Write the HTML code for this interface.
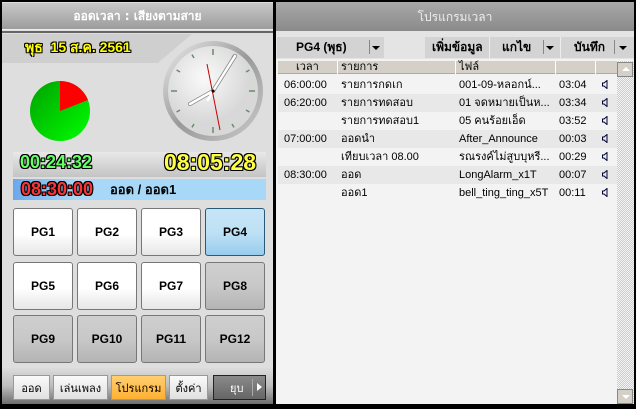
<!DOCTYPE html>
<html><head><meta charset="utf-8"><style>
*{margin:0;padding:0;box-sizing:border-box}
body{width:636px;height:409px;background:#000;position:relative;overflow:hidden;font-family:"Liberation Sans","DejaVu Sans",sans-serif;font-size:11px}
.a{position:absolute;line-height:1.2}
.th{font-family:"DejaVu Sans",sans-serif}
.pg{position:absolute;width:60px;height:48px;border:1px solid #777;border-radius:3px;background:linear-gradient(#fff,#fff 55%,#e6e6e6);display:flex;align-items:center;justify-content:center;font-weight:bold;font-size:12px;color:#000}
.pg.g{background:linear-gradient(#cfcfcf,#c8c8c8 50%,#b4b4b4)}
.pg.b{background:linear-gradient(#c6e4f6,#bfe1f5 50%,#98cdee);border-color:#2a5a7a}
.bb{position:absolute;top:375px;height:25px;border:1px solid #999;background:linear-gradient(#fafafa,#e0e0e0);display:flex;align-items:center;justify-content:center;font-size:11px;color:#000}
.row{position:absolute;left:278px;width:339px;height:18px;font-size:11px;color:#000}
.row span{position:absolute;top:0;height:18px;line-height:18px;white-space:nowrap}
.row svg{position:absolute;left:324px;top:4px}
.o{text-shadow:1px 1px 0 #000,-1px 0 #000,0 -1px #000,1px 0 #000,-1px -1px #000,1px -1px #000,-1px 1px #000}
</style></head><body>
<div class="a" style="left:2px;top:2px;width:271px;height:402px;background:#dedede"></div>
<div class="a th" style="left:2px;top:3px;width:271px;height:27px;background:linear-gradient(#c8c8c8,#9c9c9c);border-bottom:1px solid #eee;color:#fff;font-size:12px;font-weight:bold;text-align:center;line-height:27px">ออดเวลา : เสียงตามสาย</div>
<div class="a" style="left:2px;top:31px;width:271px;height:2px;background:#666"></div>
<div class="a" style="left:2px;top:34px;width:190px;height:29px;background:#cfcfcf;clip-path:polygon(0 0,100% 0,82% 100%,0 100%)"></div>
<div class="a o" style="left:25px;top:39px;font-size:14px;font-weight:bold;color:#ff0">พุธ&nbsp; 15 ส.ค. 2561</div>
<svg class="a" style="left:160px;top:38px" width="106" height="106" viewBox="0 0 106 106">
<defs><radialGradient id="r" cx="0.4" cy="0.35"><stop offset="0" stop-color="#fafafa"/><stop offset="1" stop-color="#d8d8d8"/></radialGradient>
<linearGradient id="rim" x1="0" y1="0" x2="1" y2="1"><stop offset="0" stop-color="#eee"/><stop offset="0.5" stop-color="#999"/><stop offset="1" stop-color="#ccc"/></linearGradient></defs>
<circle cx="53" cy="53" r="50" fill="url(#rim)"/>
<circle cx="53" cy="53" r="45" fill="url(#r)"/>
<g stroke="#6a8a6a" stroke-width="1.5">
<line x1="53" y1="11" x2="53" y2="17"/><line x1="53" y1="89" x2="53" y2="95"/><line x1="11" y1="53" x2="17" y2="53"/><line x1="89" y1="53" x2="95" y2="53"/>
<line x1="74" y1="16.6" x2="72" y2="20"/><line x1="89.4" y1="32" x2="86" y2="34"/><line x1="89.4" y1="74" x2="86" y2="72"/><line x1="74" y1="89.4" x2="72" y2="86"/>
<line x1="32" y1="89.4" x2="34" y2="86"/><line x1="16.6" y1="74" x2="20" y2="72"/><line x1="16.6" y1="32" x2="20" y2="34"/><line x1="32" y1="16.6" x2="34" y2="20"/></g>
<g stroke="#888" stroke-width="4" stroke-linecap="round"><line x1="53" y1="53" x2="30" y2="66"/><line x1="53" y1="53" x2="75" y2="18"/></g>
<g stroke="#fff" stroke-width="2.5" stroke-linecap="round"><line x1="53" y1="53" x2="30" y2="66"/><line x1="53" y1="53" x2="75" y2="18"/><line x1="53" y1="53" x2="48" y2="62"/></g>
<line x1="47" y1="26" x2="60" y2="92" stroke="#c00" stroke-width="1"/>
<circle cx="53" cy="53" r="1.5" fill="#000"/>
</svg>
<svg class="a" style="left:29px;top:80px" width="62" height="62" viewBox="0 0 62 62">
<defs><linearGradient id="gg" x1="0" y1="0" x2="1" y2="1"><stop offset="0" stop-color="#00a000"/><stop offset="1" stop-color="#00ff00"/></linearGradient></defs>
<circle cx="31" cy="31" r="30" fill="url(#gg)"/>
<path d="M31 31 L31 1 A30 30 0 0 1 59 20 Z" fill="#f00"/>
</svg>
<div class="a" style="left:13px;top:152px;width:253px;height:25px;background:linear-gradient(#e8e8e8,#c4c4c4)"></div>
<div class="a o" style="left:20px;top:152px;font-size:18px;font-weight:bold;color:#6f6">00:24:32</div>
<div class="a o" style="left:164px;top:149px;font-size:23px;font-weight:bold;color:#ff4">08:05:28</div>
<div class="a" style="left:13px;top:179px;width:253px;height:21px;background:linear-gradient(90deg,#6aa8ea,#a8d8f8 25%,#a8d8f8)"></div>
<div class="a o" style="left:21px;top:179px;font-size:18px;font-weight:bold;color:#f33">08:30:00</div>
<div class="a" style="left:110px;top:182px;font-size:13px;font-weight:bold;color:#000">ออด / ออด1</div>
<div class="pg" style="left:13px;top:208px">PG1</div><div class="pg" style="left:77px;top:208px">PG2</div><div class="pg" style="left:141px;top:208px">PG3</div><div class="pg b" style="left:205px;top:208px">PG4</div>
<div class="pg" style="left:13px;top:262px">PG5</div><div class="pg" style="left:77px;top:262px">PG6</div><div class="pg" style="left:141px;top:262px">PG7</div><div class="pg g" style="left:205px;top:262px">PG8</div>
<div class="pg g" style="left:13px;top:315px">PG9</div><div class="pg g" style="left:77px;top:315px">PG10</div><div class="pg g" style="left:141px;top:315px">PG11</div><div class="pg g" style="left:205px;top:315px">PG12</div>
<div class="a" style="left:2px;top:368px;width:271px;height:36px;background:linear-gradient(#dcdcdc,#bdbdbd 50%,#6e6e6e)"></div>
<div class="bb" style="left:13px;width:37px">ออด</div>
<div class="bb" style="left:53px;width:55px">เล่นเพลง</div>
<div class="bb" style="left:111px;width:55px;background:linear-gradient(#ffcf70,#ffb030);border-color:#d90">โปรแกรม</div>
<div class="bb" style="left:169px;width:39px">ตั้งค่า</div>
<div class="bb" style="left:213px;width:53px;background:linear-gradient(#8a8a8a,#666);border-color:#222;color:#fff;justify-content:flex-start;padding-left:16px">ยุบ<span style="position:absolute;left:38px;top:3px;width:1px;height:17px;background:#aaa"></span><span style="position:absolute;left:43px;top:7px;border-left:5px solid #fff;border-top:4px solid transparent;border-bottom:4px solid transparent"></span></div>
<div class="a" style="left:276px;top:2px;width:358px;height:402px;background:#f3f3f3"></div>
<div class="a th" style="left:276px;top:2px;width:358px;height:29px;background:linear-gradient(#a8a8a8,#8a8a8a);color:#eee;font-size:12px;text-align:center;line-height:31px">โปรแกรมเวลา</div>
<div class="a" style="left:276px;top:31px;width:358px;height:28px;background:#e4e4e4"></div>
<div class="a" style="left:277px;top:37px;width:107px;height:21px;background:#d3d3d3"></div>
<div class="a" style="left:296px;top:40px;font-size:12px;font-weight:bold">PG4 (พุธ)</div>
<div class="a" style="left:369px;top:40px;width:1px;height:14px;background:#888"></div>
<div class="a" style="left:372px;top:46px;border-top:4px solid #000;border-left:4px solid transparent;border-right:4px solid transparent"></div>
<div class="a" style="left:425px;top:37px;width:209px;height:21px;background:#d3d3d3"></div>
<div class="a" style="left:489px;top:37px;width:1px;height:21px;background:#eee"></div>
<div class="a" style="left:560px;top:37px;width:1px;height:21px;background:#eee"></div>
<div class="a" style="left:432px;top:40px;font-size:12px;font-weight:bold">เพิ่มข้อมูล</div>
<div class="a" style="left:502px;top:40px;font-size:12px;font-weight:bold">แกไข</div>
<div class="a" style="left:543px;top:40px;width:1px;height:14px;background:#888"></div>
<div class="a" style="left:546px;top:46px;border-top:4px solid #000;border-left:4px solid transparent;border-right:4px solid transparent"></div>
<div class="a" style="left:574px;top:40px;font-size:12px;font-weight:bold">บันทึก</div>
<div class="a" style="left:614px;top:40px;width:1px;height:14px;background:#888"></div>
<div class="a" style="left:619px;top:46px;border-top:4px solid #000;border-left:4px solid transparent;border-right:4px solid transparent"></div>
<div class="a" style="left:278px;top:61px;width:339px;height:13px;background:#d4d0c8;border-bottom:1px solid #aaa"></div>
<div class="a" style="left:337px;top:61px;width:1px;height:13px;background:#fff"></div>
<div class="a" style="left:455px;top:61px;width:1px;height:13px;background:#fff"></div>
<div class="a" style="left:555px;top:61px;width:1px;height:13px;background:#fff"></div>
<div class="a" style="left:595px;top:61px;width:1px;height:13px;background:#fff"></div>
<div class="a" style="left:296px;top:61px;font-size:11px;line-height:13px">เวลา</div>
<div class="a" style="left:341px;top:61px;font-size:11px;line-height:13px">รายการ</div>
<div class="a" style="left:459px;top:61px;font-size:11px;line-height:13px">ไฟล์</div>
<div class="a" style="left:617px;top:61px;width:17px;height:343px;background:repeating-conic-gradient(#ccc 0 25%,#f4f4f4 0 50%) 0 0/2px 2px"></div>
<div class="a" style="left:617px;top:62px;width:16px;height:15px;background:#d4d0c8;border:1px solid #888"><span style="position:absolute;left:4px;top:4px;border-bottom:4px solid #fff;border-left:4px solid transparent;border-right:4px solid transparent"></span></div>
<div class="a" style="left:617px;top:389px;width:16px;height:15px;background:#d4d0c8;border:1px solid #888"><span style="position:absolute;left:4px;top:5px;border-top:4px solid #fff;border-left:4px solid transparent;border-right:4px solid transparent"></span></div>
<div class="row" style="top:76px;background:#f3f3f3"><span style="left:6px">06:00:00</span><span style="left:63px">รายการกดเก</span><span style="left:181px">001-09-หลอกน์...</span><span style="left:281px">03:04</span><svg width="6" height="9"><path d="M5 0.5V8.5L2 6H0.5V3H2Z" fill="none" stroke="#003"/></svg></div>
<div class="row" style="top:94px;background:#e8e8e8"><span style="left:6px">06:20:00</span><span style="left:63px">รายการทดสอบ</span><span style="left:181px">01 จดหมายเป็นห...</span><span style="left:281px">03:34</span><svg width="6" height="9"><path d="M5 0.5V8.5L2 6H0.5V3H2Z" fill="none" stroke="#003"/></svg></div>
<div class="row" style="top:112px;background:#f3f3f3"><span style="left:63px">รายการทดสอบ1</span><span style="left:181px">05 คนร้อยเอ็ด</span><span style="left:281px">03:52</span><svg width="6" height="9"><path d="M5 0.5V8.5L2 6H0.5V3H2Z" fill="none" stroke="#003"/></svg></div>
<div class="row" style="top:130px;background:#e8e8e8"><span style="left:6px">07:00:00</span><span style="left:63px">ออดนำ</span><span style="left:181px">After_Announce</span><span style="left:281px">00:03</span><svg width="6" height="9"><path d="M5 0.5V8.5L2 6H0.5V3H2Z" fill="none" stroke="#003"/></svg></div>
<div class="row" style="top:148px;background:#f3f3f3"><span style="left:63px">เทียบเวลา 08.00</span><span style="left:181px">รณรงค์ไม่สูบบุหรี...</span><span style="left:281px">00:29</span><svg width="6" height="9"><path d="M5 0.5V8.5L2 6H0.5V3H2Z" fill="none" stroke="#003"/></svg></div>
<div class="row" style="top:166px;background:#e8e8e8"><span style="left:6px">08:30:00</span><span style="left:63px">ออด</span><span style="left:181px">LongAlarm_x1T</span><span style="left:281px">00:07</span><svg width="6" height="9"><path d="M5 0.5V8.5L2 6H0.5V3H2Z" fill="none" stroke="#003"/></svg></div>
<div class="row" style="top:184px;background:#f3f3f3"><span style="left:63px">ออด1</span><span style="left:181px">bell_ting_ting_x5T</span><span style="left:281px">00:11</span><svg width="6" height="9"><path d="M5 0.5V8.5L2 6H0.5V3H2Z" fill="none" stroke="#003"/></svg></div>
</body></html>
